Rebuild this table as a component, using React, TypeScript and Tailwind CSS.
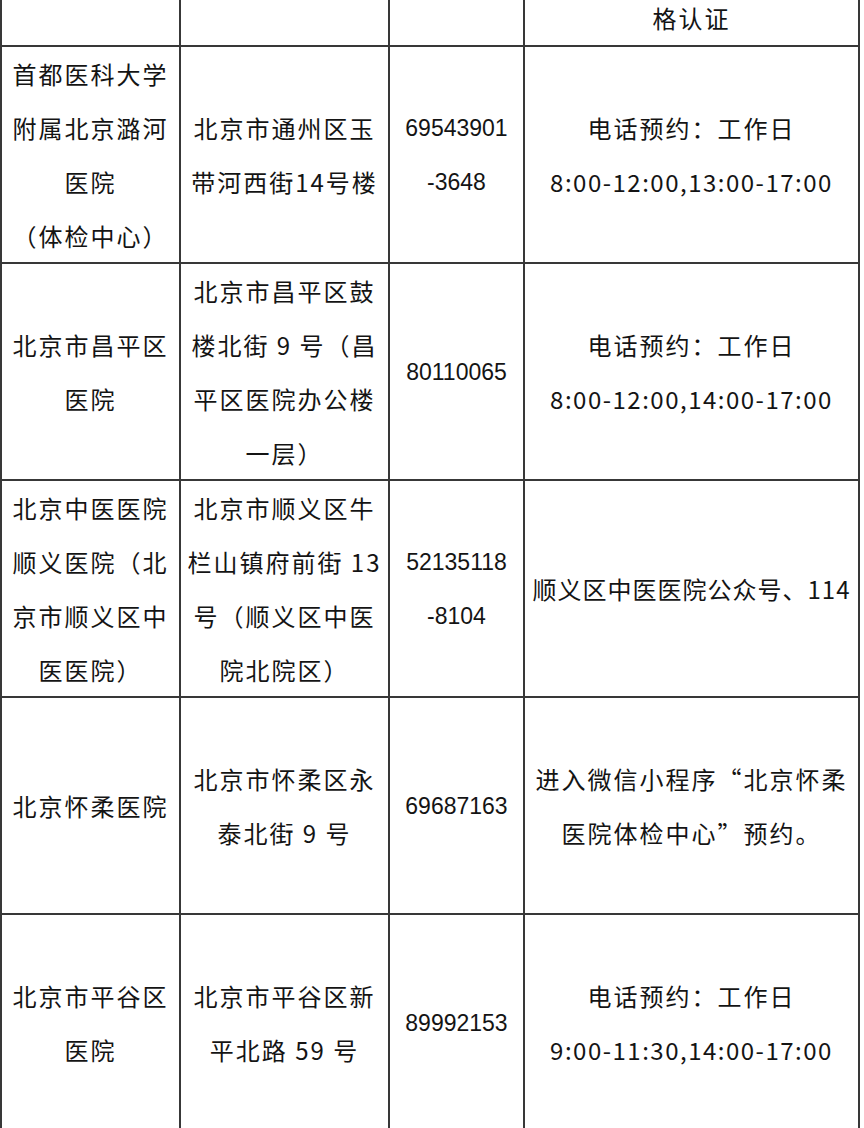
const cjk = "font-['Noto_Sans_CJK_SC',sans-serif]";

type Line = string | { text: string; tracking: string };

interface Row {
  name: Line[];
  address: Line[];
  phone: Line[];
  booking: Line[];
}

const rows: Row[] = [
  {
    name: ["首都医科大学", "附属北京潞河", "医院", "（体检中心）"],
    address: ["北京市通州区玉", "带河西街14号楼"],
    phone: ["69543901", "-3648"],
    booking: ["电话预约：工作日", { text: "8:00-12:00,13:00-17:00", tracking: "tracking-[1.5px]" }],
  },
  {
    name: ["北京市昌平区", "医院"],
    address: ["北京市昌平区鼓", "楼北街 9 号（昌", "平区医院办公楼", "一层）"],
    phone: ["80110065"],
    booking: ["电话预约：工作日", { text: "8:00-12:00,14:00-17:00", tracking: "tracking-[1.5px]" }],
  },
  {
    name: ["北京中医医院", "顺义医院（北", "京市顺义区中", "医医院）"],
    address: ["北京市顺义区牛", "栏山镇府前街 13", "号（顺义区中医", "院北院区）"],
    phone: ["52135118", "-8104"],
    booking: [{ text: "顺义区中医医院公众号、114", tracking: "tracking-[1px]" }],
  },
  {
    name: ["北京怀柔医院"],
    address: ["北京市怀柔区永", "泰北街 9 号"],
    phone: ["69687163"],
    booking: ["进入微信小程序“北京怀柔", "医院体检中心”预约。"],
  },
  {
    name: ["北京市平谷区", "医院"],
    address: ["北京市平谷区新", "平北路 59 号"],
    phone: ["89992153"],
    booking: ["电话预约：工作日", { text: "9:00-11:30,14:00-17:00", tracking: "tracking-[1.5px]" }],
  },
];

function Cell({ lines, width, mono = false }: { lines: Line[]; width: string; mono?: boolean }) {
  return (
    <div className={`${width} shrink-0 flex flex-col items-center justify-center border-r-2 border-[#383838]`}>
      {lines.map((line, i) => {
        const text = typeof line === "string" ? line : line.text;
        const tracking = typeof line === "string" ? "tracking-[2px]" : line.tracking;
        return (
          <div
            key={i}
            className={`whitespace-nowrap leading-[54px] text-[#141414] ${
              mono
                ? "font-['Liberation_Sans','Noto_Sans_CJK_SC',sans-serif] text-[23px] tracking-normal"
                : `${cjk} text-[24px] ${tracking}`
            }`}
          >
            {text}
          </div>
        );
      })}
    </div>
  );
}

export default function App() {
  return (
    <div className="h-[1128px] w-[864px] overflow-hidden bg-white">
      <div className="w-[860px] border-l-2 border-[#383838]">
        {/* header remnant */}
        <div className="flex h-[47px] border-b-2 border-[#383838]">
          <div className="w-[179px] shrink-0 border-r-2 border-[#383838]" />
          <div className="w-[209px] shrink-0 border-r-2 border-[#383838]" />
          <div className="w-[135px] shrink-0 border-r-2 border-[#383838]" />
          <div className="w-[335px] shrink-0 border-r-2 border-[#383838] flex justify-center">
            <span className={`${cjk} text-[24px] tracking-[2px] leading-[36px] text-[#141414]`}>格认证</span>
          </div>
        </div>

        {rows.map((row, i) => (
          <div key={i} className="flex h-[217px] border-b-2 border-[#383838]">
            <Cell lines={row.name} width="w-[179px]" />
            <Cell lines={row.address} width="w-[209px]" />
            <Cell lines={row.phone} width="w-[135px]" mono />
            <Cell lines={row.booking} width="w-[335px]" />
          </div>
        ))}
      </div>
    </div>
  );
}
